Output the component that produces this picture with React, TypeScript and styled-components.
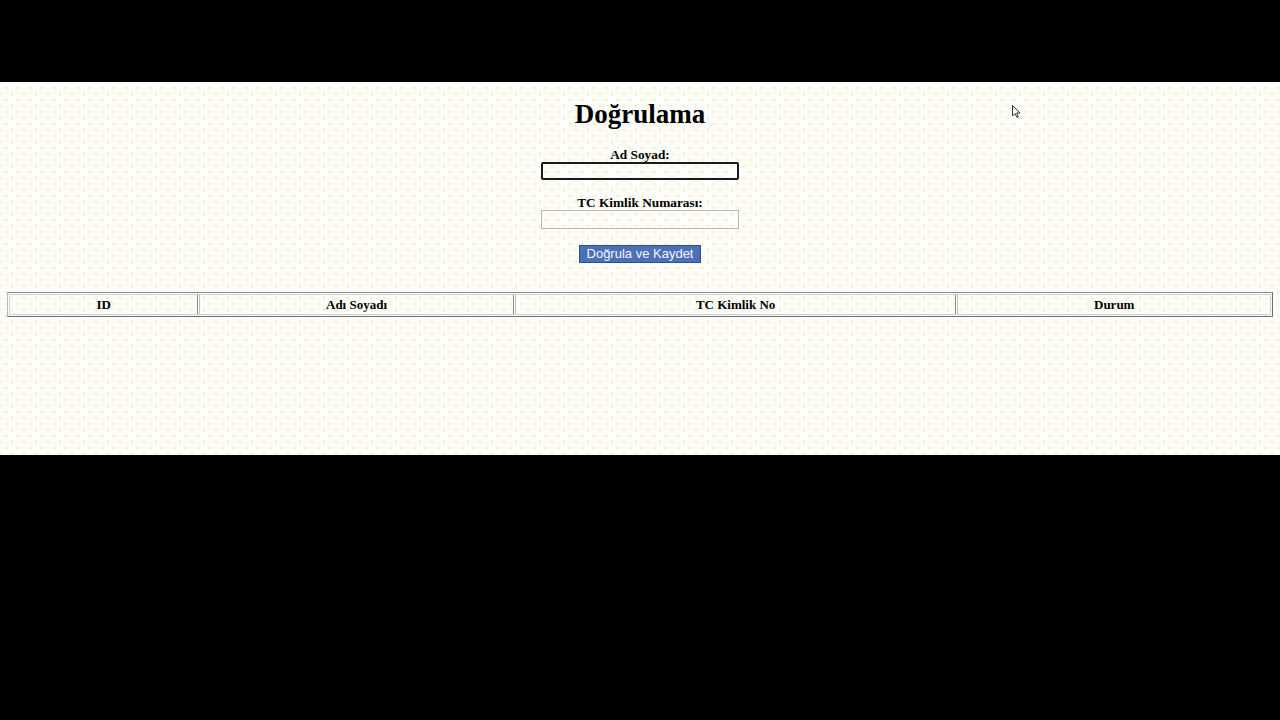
import React from "react";
import styled, { createGlobalStyle } from "styled-components";

const Global = createGlobalStyle`
  html, body { margin: 0; padding: 0; background: #000; }
  body { font-family: "Liberation Serif", "Times New Roman", serif; }
`;

const Page = styled.div`
  width: 1280px;
  height: 720px;
  background: #000;
  display: flex;
  flex-direction: column;
`;

const TopBar = styled.div`
  height: 82px;
  background: #000;
  flex: none;
`;

const Content = styled.main`
  position: relative;
  height: 373px;
  flex: none;
  background-color: #fdfdfe;
  background-image: radial-gradient(circle, #f5f0a0 0.7px, transparent 1px),
    radial-gradient(circle, #f5f0a0 0.7px, transparent 1px);
  background-size: 12px 12px;
  background-position: 0 0, 6px 6px;
  display: flex;
  flex-direction: column;
  align-items: center;
  padding: 0 7px;
  box-sizing: border-box;
  color: #000;
`;

const Title = styled.h1`
  margin: 17px 0 0;
  font-size: 27px;
  line-height: 30px;
  font-weight: bold;
`;

const Form = styled.form`
  display: flex;
  flex-direction: column;
  align-items: center;
  margin-top: 18px;
`;

const Label = styled.label<{ $gap?: number }>`
  font-size: 13.3px;
  font-weight: bold;
  line-height: 15px;
  margin-top: ${(p) => p.$gap ?? 0}px;
`;

const Input = styled.input<{ $focused?: boolean }>`
  width: 198px;
  height: ${(p) => (p.$focused ? 18 : 19)}px;
  box-sizing: border-box;
  margin: 0;
  padding: 1px 2px;
  background: transparent;
  border: ${(p) => (p.$focused ? "2px solid #1a1a1a" : "1px solid #b9b9b9")};
  border-radius: ${(p) => (p.$focused ? "2px" : "0")};
  outline: none;
  font-family: "Liberation Sans", Arial, sans-serif;
  font-size: 13px;
`;

const Button = styled.button`
  margin-top: 16px;
  width: 122px;
  height: 18px;
  box-sizing: border-box;
  padding: 0;
  background: #4c70b6;
  color: #f4f6ff;
  border: 1px solid #2f4f88;
  font-family: "Liberation Sans", Arial, sans-serif;
  font-size: 13px;
  line-height: 16px;
`;

const Table = styled.table`
  margin-top: 29px;
  width: 1266px;
  table-layout: fixed;
  border-collapse: separate;
  border-spacing: 1px;
  border: 1px solid #6e6e6e;
  border-left-color: #b8b8b8;
  border-top-color: #8a8a8a;
  outline: 1px solid #cfcfcf;
  outline-offset: -3px;
`;

const Th = styled.th<{ $w: number }>`
  width: ${(p) => p.$w}px;
  height: 19px;
  padding: 0;
  border: 1px solid #9a9a9a;
  border-left-color: #c4c4c4;
  border-bottom-color: #5e5e5e;
  border-right-color: #8a8a8a;
  font-size: 13px;
  font-weight: bold;
  text-align: center;
  line-height: 17px;
`;

const Cursor = styled.svg`
  position: absolute;
  left: 1012px;
  top: 23px;
`;

const BottomBar = styled.div`
  flex: 1;
  background: #000;
`;

export default function App() {
  return (
    <>
      <Global />
      <Page>
        <TopBar />
        <Content>
          <Title>Doğrulama</Title>
          <Form onSubmit={(e) => e.preventDefault()}>
            <Label htmlFor="ad">Ad Soyad:</Label>
            <Input id="ad" $focused />
            <Label htmlFor="tc" $gap={15}>
              TC Kimlik Numarası:
            </Label>
            <Input id="tc" />
            <Button type="submit">Doğrula ve Kaydet</Button>
          </Form>
          <Table>
            <thead>
              <tr>
                <Th $w={187}>ID</Th>
                <Th $w={312}>Adı Soyadı</Th>
                <Th $w={439}>TC Kimlik No</Th>
                <Th $w={311}>Durum</Th>
              </tr>
            </thead>
          </Table>
          <Cursor width="10" height="14" viewBox="0 0 10 14">
            <path
              d="M0.5 0.5 L0.5 11 L3 8.5 L5 12.5 L6.5 11.8 L4.6 8 L8 8 Z"
              fill="#fff"
              stroke="#333"
              strokeWidth="1"
            />
          </Cursor>
        </Content>
        <BottomBar />
      </Page>
    </>
  );
}
